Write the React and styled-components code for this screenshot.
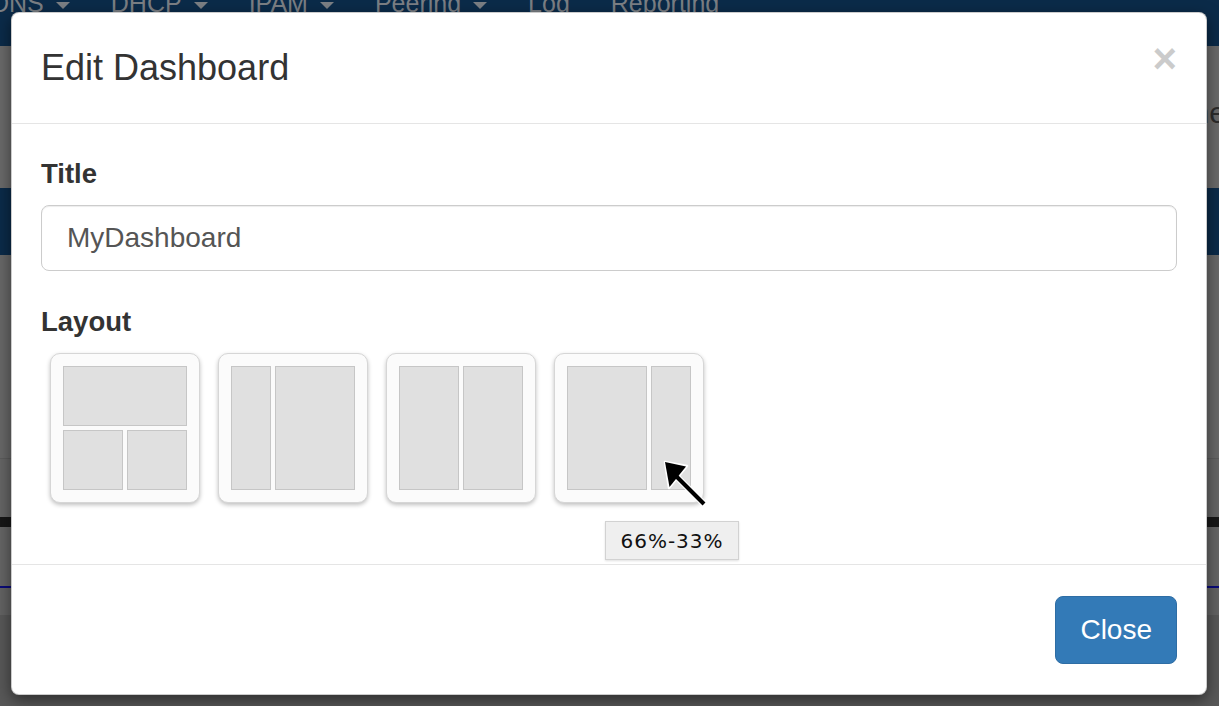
import React from "react";
import styled, { createGlobalStyle } from "styled-components";

const GlobalStyle = createGlobalStyle`
  html, body { margin: 0; padding: 0; }
  body { font-family: "Liberation Sans", Arial, sans-serif; }
  * { box-sizing: border-box; }
`;

const Page = styled.div`
  position: relative;
  width: 1219px;
  height: 706px;
  overflow: hidden;
  background: #5a5a5a;
  display: flex;
  flex-direction: column;
`;

const NavBar = styled.div`
  height: 46px;
  flex: none;
  background: #0b2b49;
  overflow: hidden;
`;

const NavList = styled.ul`
  list-style: none;
  margin: -9px 0 0 -9px;
  padding: 0;
  display: flex;
  gap: 41px;
`;

const NavItem = styled.li`
  display: flex;
  align-items: center;
  gap: 12px;
  font-size: 25px;
  line-height: 25px;
  color: #7b7f84;
  white-space: nowrap;
`;

const Caret = styled.span`
  width: 0;
  height: 0;
  border-left: 7px solid transparent;
  border-right: 7px solid transparent;
  border-top: 7px solid #7b7f84;
  margin-top: 4px;
`;

const Band = styled.div`
  flex: none;
  height: ${(p) => p.$h}px;
  background: ${(p) => p.$bg};
  display: flex;
  justify-content: flex-end;
  align-items: flex-end;
`;

const PageHeading = styled.h1`
  margin: 0 -7px 60px 0;
  font-size: 30px;
  line-height: 30px;
  font-weight: 400;
  color: #2c2c2c;
`;

const Rest = styled.div`
  flex: 1;
  background: #585858;
`;

const Modal = styled.div`
  position: absolute;
  top: 12px;
  left: 11px;
  width: 1196px;
  background: #fff;
  border: 1px solid rgba(0, 0, 0, 0.2);
  border-radius: 8px;
  box-shadow: 0 5px 15px rgba(0, 0, 0, 0.5);
  display: flex;
  flex-direction: column;
  color: #333;
`;

const Header = styled.div`
  padding: 29px 29px 30px;
  border-bottom: 1px solid #e5e5e5;
  display: flex;
  justify-content: space-between;
  align-items: flex-start;
`;

const Title = styled.h4`
  margin: 0;
  font-size: 36px;
  line-height: 51px;
  font-weight: 400;
  color: #333;
`;

const CloseX = styled.button`
  margin: -4px 0 0;
  padding: 0;
  border: 0;
  background: transparent;
  font-family: "Liberation Sans", Arial, sans-serif;
  font-size: 42px;
  line-height: 42px;
  font-weight: 700;
  color: #000;
  opacity: 0.2;
  cursor: pointer;
`;

const Body = styled.div`
  padding: 30px 29px;
`;

const FormGroup = styled.div`
  margin-bottom: ${(p) => (p.$last ? 0 : 31)}px;
`;

const Label = styled.label`
  display: block;
  font-size: 27.5px;
  line-height: 39px;
  font-weight: 700;
  color: #333;
  margin-bottom: 12px;
`;

const Input = styled.input`
  display: block;
  width: 100%;
  height: 66px;
  padding: 0 25px;
  font-family: "Liberation Sans", Arial, sans-serif;
  font-size: 28px;
  color: #555;
  background: #fff;
  border: 1px solid #ccc;
  border-radius: 8px;
  box-shadow: inset 0 1px 1px rgba(0, 0, 0, 0.075);
  outline: none;
`;

const LayoutRow = styled.div`
  display: flex;
  gap: 18px;
  margin-top: 1px;
  padding: 0 0 31px 9px;
`;

const Thumb = styled.div`
  position: relative;
  width: 150px;
  height: 150px;
  padding: 12px;
  background: #fbfbfb;
  border: 1px solid #d6d6d6;
  border-radius: 10px;
  box-shadow: 0 2px 4px rgba(0, 0, 0, 0.25);
  display: grid;
  gap: 4px;
  grid-template-columns: ${(p) => p.$cols};
  grid-template-rows: ${(p) => p.$rows || "1fr"};
`;

const Panel = styled.div`
  background: #e0e0e0;
  border: 1px solid #c6c6c6;
  grid-column: ${(p) => p.$span || "auto"};
`;

const Tooltip = styled.div`
  position: absolute;
  left: 50px;
  top: 167px;
  width: 134px;
  height: 39px;
  display: flex;
  align-items: center;
  justify-content: center;
  background: #efefef;
  border: 1px solid #d2d2d2;
  box-shadow: 0 1px 2px rgba(0, 0, 0, 0.12);
  font-family: "DejaVu Sans", sans-serif;
  font-size: 20px;
  letter-spacing: 1px;
  color: #111;
  white-space: nowrap;
  z-index: 2;
`;

const Pointer = styled.svg`
  position: absolute;
  left: 104px;
  top: 104px;
  width: 52px;
  height: 52px;
  z-index: 3;
`;

const Footer = styled.div`
  padding: 31px 29px 30px;
  border-top: 1px solid #e5e5e5;
  display: flex;
  justify-content: flex-end;
`;

const Button = styled.button`
  height: 68px;
  padding: 0 24px;
  font-family: "Liberation Sans", Arial, sans-serif;
  font-size: 28px;
  color: #fff;
  background: #337ab7;
  border: 1px solid #2e6da4;
  border-radius: 8px;
  cursor: pointer;
`;

const layouts = [
  { key: "a", cols: "1fr 1fr", rows: "1fr 1fr", panels: ["1 / 3", null, null] },
  { key: "b", cols: "1fr 2fr", panels: [null, null] },
  { key: "c", cols: "1fr 1fr", panels: [null, null] },
  { key: "d", cols: "2fr 1fr", panels: [null, null], tip: "66%-33%" },
];

export default function App() {
  return (
    <>
      <GlobalStyle />
      <Page>
        <NavBar>
          <NavList>
            <NavItem>DNS<Caret /></NavItem>
            <NavItem>DHCP<Caret /></NavItem>
            <NavItem>IPAM<Caret /></NavItem>
            <NavItem>Peering<Caret /></NavItem>
            <NavItem>Log</NavItem>
            <NavItem>Reporting</NavItem>
          </NavList>
        </NavBar>
        <Band $h={142} $bg="#6a6a6a">
          <PageHeading>Home</PageHeading>
        </Band>
        <Band $h={67} $bg="#0b2b49" />
        <Band $h={203} $bg="#686868" />
        <Band $h={1} $bg="#5c5c5c" />
        <Band $h={58} $bg="#656565" />
        <Band $h={10} $bg="#171717" />
        <Band $h={59} $bg="#656565" />
        <Band $h={2} $bg="#0b0b7a" />
        <Band $h={27} $bg="#636363" />
        <Rest />

        <Modal role="dialog">
          <Header>
            <Title>Edit Dashboard</Title>
            <CloseX aria-label="Close">×</CloseX>
          </Header>
          <Body>
            <FormGroup>
              <Label>Title</Label>
              <Input defaultValue="MyDashboard" />
            </FormGroup>
            <FormGroup $last>
              <Label>Layout</Label>
              <LayoutRow>
                {layouts.map((l) => (
                  <Thumb key={l.key} $cols={l.cols} $rows={l.rows}>
                    {l.panels.map((span, i) => (
                      <Panel key={i} $span={span} />
                    ))}
                    {l.tip && (
                      <>
                        <Pointer viewBox="0 0 52 52">
                          <line x1="16" y1="17" x2="45" y2="46" stroke="#fff" strokeWidth="6.5" strokeLinecap="round" />
                          <polygon points="6,4 28,8 10,30" fill="#fff" stroke="#fff" strokeWidth="2.5" strokeLinejoin="round" />
                          <line x1="16" y1="17" x2="45" y2="46" stroke="#000" strokeWidth="4" strokeLinecap="butt" />
                          <polygon points="6,4 27,8.5 10.5,29" fill="#000" />
                        </Pointer>
                        <Tooltip>{l.tip}</Tooltip>
                      </>
                    )}
                  </Thumb>
                ))}
              </LayoutRow>
            </FormGroup>
          </Body>
          <Footer>
            <Button>Close</Button>
          </Footer>
        </Modal>
      </Page>
    </>
  );
}
